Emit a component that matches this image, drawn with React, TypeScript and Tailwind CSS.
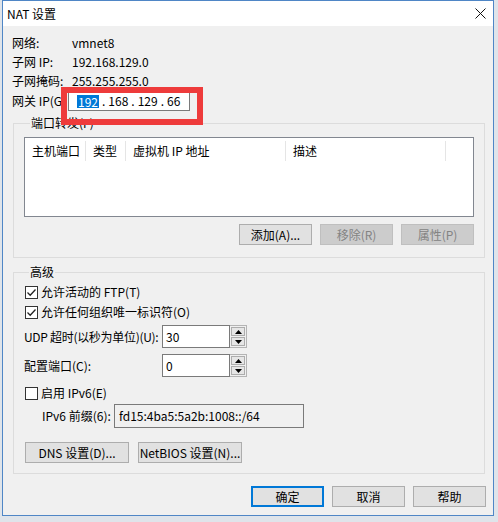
import React from "react"

const font = { fontFamily: '"Noto Sans CJK SC", "Noto Sans", sans-serif' }

function Btn({ label, disabled, primary, w }: { label: string; disabled?: boolean; primary?: boolean; w: string }) {
  if (primary)
    return (
      <div className={`${w} h-[21px] border-2 border-[#0078d7] bg-[#e1e1e1] flex items-center justify-center text-black`}>
        {label}
      </div>
    )
  return (
    <div
      className={`${w} h-[21px] border flex items-center justify-center ${
        disabled ? "bg-[#cccccc] border-[#bfbfbf] text-[#838383]" : "bg-[#e1e1e1] border-[#adadad] text-black"
      }`}
    >
      {label}
    </div>
  )
}

function Check({ checked }: { checked?: boolean }) {
  return (
    <div className="w-[13px] h-[13px] border border-[#333333] bg-white shrink-0 flex items-center justify-center">
      {checked && (
        <svg width="11" height="11" viewBox="0 0 11 11">
          <path d="M1.5 5.5 L4.2 8.2 L9.5 2.5" fill="none" stroke="#222" strokeWidth="1.3" />
        </svg>
      )}
    </div>
  )
}

function Spin({ value }: { value: string }) {
  return (
    <div className="flex h-[23px] shrink-0">
      <div className="w-[68px] h-full border border-[#7a7a7a] bg-white pl-[3px] flex items-center">{value}</div>
      <div className="w-[17px] h-full border border-[#b4b4b4] border-l-0 bg-[#f0f0f0] flex flex-col p-[1px] gap-[1px]">
        <div className="flex-1 border border-[#adadad] bg-[#e6e6e6] flex items-center justify-center">
          <svg width="7" height="4" viewBox="0 0 7 4"><path d="M0 4 L3.5 0 L7 4 Z" fill="#000" /></svg>
        </div>
        <div className="flex-1 border border-[#adadad] bg-[#e6e6e6] flex items-center justify-center">
          <svg width="7" height="4" viewBox="0 0 7 4"><path d="M0 0 L3.5 4 L7 0 Z" fill="#000" /></svg>
        </div>
      </div>
    </div>
  )
}

const cols = [
  { t: "主机端口", w: "w-[61px]" },
  { t: "类型", w: "w-[40px]" },
  { t: "虚拟机 IP 地址", w: "w-[160px]" },
  { t: "描述", w: "w-[160px]" },
]

export default function App() {
  return (
    <div className="relative w-[498px] h-[522px] bg-[#dfe4ea] overflow-hidden text-[12px] text-black" style={font}>
      <div className="ml-[2px] w-[492px] border border-[#4f86c6] bg-[#f0f0f0]">
        <div className="h-[25px] bg-white flex items-center justify-between pl-[4px] pr-[7px]">
          <span className="leading-[16px]">NAT 设置</span>
          <svg width="11" height="11" viewBox="0 0 11 11">
            <path d="M0.5 0.5 L10.5 10.5 M10.5 0.5 L0.5 10.5" stroke="#111" strokeWidth="1" />
          </svg>
        </div>

        <div className="pt-[7px] pl-[9px]">
          {[
            ["网络:", "vmnet8"],
            ["子网 IP:", "192.168.129.0"],
            ["子网掩码:", "255.255.255.0"],
          ].map(([k, v]) => (
            <div key={k} className="h-[19px] flex items-center">
              <span className="w-[60px]">{k}</span>
              <span>{v}</span>
            </div>
          ))}
          <div className="h-[22px] flex items-center">
            <span className="w-[56px] shrink-0 whitespace-nowrap">网关 IP(G</span>
            <div className="w-[122px] h-[19px] border border-[#7a7a7a] bg-white flex items-center pl-[8px] gap-[3px]">
              <span className="bg-[#0078d7] text-white px-[1px] leading-[13px]">192</span>
              <span>.</span>
              <span>168</span>
              <span>.</span>
              <span>129</span>
              <span>.</span>
              <span>66</span>
            </div>
          </div>
        </div>

        <fieldset className="mt-[3px] ml-[10px] w-[472px] border border-[#dcdcdc] px-[10px] pb-[12px]">
          <legend className="ml-[6px] px-[1px] leading-[16px]">端口转发(F)</legend>
          <div className="mt-[6px] h-[80px] border border-[#828790] bg-white">
            <div className="flex h-[25px] items-center">
              {cols.map((c) => (
                <div key={c.t} className={`${c.w} h-[20px] flex items-center pl-[7px] border-r border-[#e5e5e5] shrink-0`}>
                  {c.t}
                </div>
              ))}
            </div>
          </div>
          <div className="mt-[7px] flex justify-end gap-[8px]">
            <Btn label="添加(A)..." w="w-[73px]" />
            <Btn label="移除(R)" w="w-[73px]" disabled />
            <Btn label="属性(P)" w="w-[73px]" disabled />
          </div>
        </fieldset>

        <fieldset className="mt-[6px] ml-[10px] w-[472px] border border-[#dcdcdc] pl-[10px] pb-[10px]">
          <legend className="ml-[5px] px-[1px] leading-[16px]">高级</legend>
          <div className="mt-[2px] h-[20px] flex items-center gap-[3px] pl-[1px]">
            <Check checked />
            <span>允许活动的 FTP(T)</span>
          </div>
          <div className="h-[20px] flex items-center gap-[3px] pl-[1px]">
            <Check checked />
            <span>允许任何组织唯一标识符(O)</span>
          </div>
          <div className="mt-[3px] flex items-center">
            <span className="w-[138px] shrink-0 whitespace-nowrap tracking-[-0.3px]">UDP 超时(以秒为单位)(U):</span>
            <Spin value="30" />
          </div>
          <div className="mt-[6px] flex items-center">
            <span className="w-[138px] shrink-0">配置端口(C):</span>
            <Spin value="0" />
          </div>
          <div className="mt-[6px] h-[20px] flex items-center gap-[3px] pl-[1px]">
            <Check />
            <span>启用 IPv6(E)</span>
          </div>
          <div className="mt-[1px] h-[24px] flex items-center pl-[18px]">
            <span className="w-[72px] shrink-0 whitespace-nowrap">IPv6 前缀(6):</span>
            <div className="w-[190px] h-[24px] border border-[#7a7a7a] bg-[#f0f0f0] flex items-center pl-[4px]">
              fd15:4ba5:5a2b:1008::/64
            </div>
          </div>
          <div className="mt-[14px] flex gap-[9px] pl-[1px]">
            <Btn label="DNS 设置(D)..." w="w-[104px]" />
            <Btn label="NetBIOS 设置(N)..." w="w-[104px]" />
          </div>
        </fieldset>

        <div className="mt-[12px] pb-[8px] pr-[7px] flex justify-end gap-[8px]">
          <Btn label="确定" w="w-[73px]" primary />
          <Btn label="取消" w="w-[73px]" />
          <Btn label="帮助" w="w-[73px]" />
        </div>
      </div>

      <div className="absolute left-[61px] top-[87px] w-[142px] h-[38px] border-[6px] border-[#ee3b3b]" />
    </div>
  )
}
